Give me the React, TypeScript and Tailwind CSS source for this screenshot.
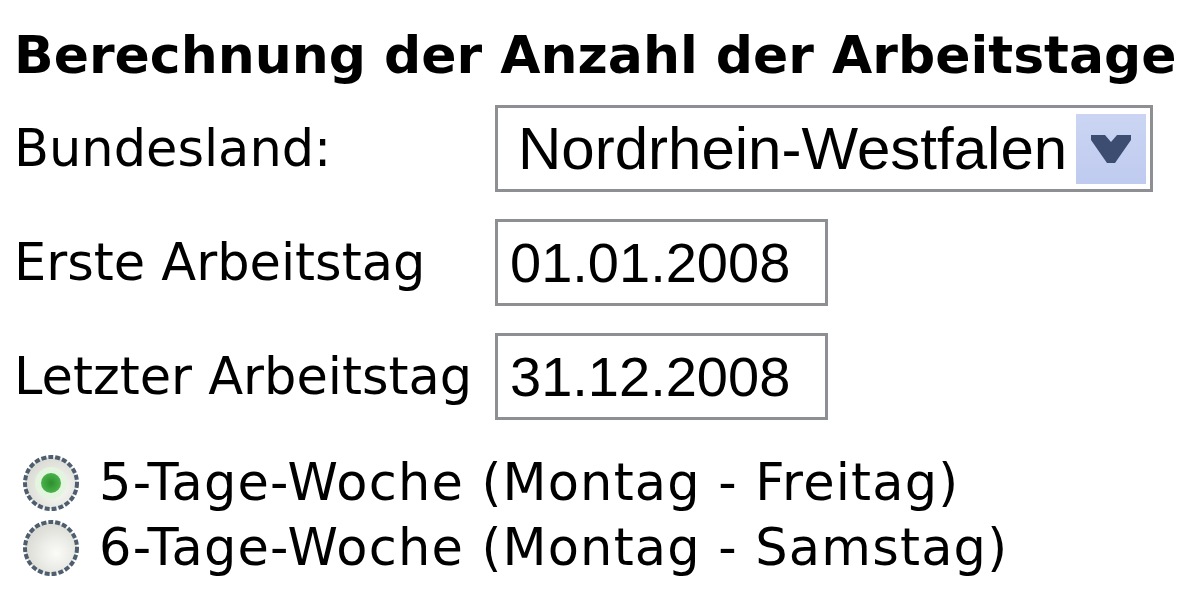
import React, { useState } from 'react';

const Radio: React.FC<{ checked: boolean }> = ({ checked }) => (
  <svg width="60" height="60" viewBox="0 0 60 60" className="shrink-0">
    <defs>
      <radialGradient id={checked ? 'rg1' : 'rg2'} cx="60%" cy="60%" r="70%">
        <stop offset="0%" stopColor="#fbfbf9" />
        <stop offset="100%" stopColor="#d6d6cf" />
      </radialGradient>
      <radialGradient id="dot" cx="50%" cy="50%" r="50%">
        <stop offset="0%" stopColor="#2b8f2b" />
        <stop offset="100%" stopColor="#4bb34b" />
      </radialGradient>
    </defs>
    <circle cx="30" cy="30" r="26" fill={`url(#${checked ? 'rg1' : 'rg2'})`} stroke="#4e5e6e" strokeWidth="4" strokeDasharray="5 2" />
    {checked && <circle cx="30" cy="30" r="16" fill="#e4f5df" />}
    {checked && <circle cx="30" cy="30" r="10" fill="url(#dot)" />}
  </svg>
);

const App: React.FC = () => {
  const [week, setWeek] = useState<5 | 6>(5);

  return (
    <div className="w-[1200px] h-[602px] overflow-hidden bg-white text-black pl-[14px] pt-[25px] font-['DejaVu_Sans',Verdana,sans-serif]">
      <h1 className="text-[52px] font-bold leading-[60px] whitespace-nowrap">
        Berechnung der Anzahl der Arbeitstage
      </h1>

      <div className="mt-[20px] flex flex-col gap-[27px]">
        <div className="flex items-center">
          <div className="w-[481px] text-[51px] leading-[60px]">Bundesland:</div>
          <div className="w-[658px] h-[87px] border-[3px] border-[#8d8f92] bg-white flex items-center pl-[20px] pr-[4px]">
            <span className="flex-1 text-[60px] leading-[70px] font-['Liberation_Sans',Arial,sans-serif] whitespace-nowrap">
              Nordrhein-Westfalen
            </span>
            <div className="w-[70px] h-[70px] bg-gradient-to-b from-[#cbd5f3] to-[#bfcbef] flex items-center justify-center">
              <svg width="40" height="28" viewBox="0 0 40 28">
                <polygon points="0,0 14,0 20,7 26,0 40,0 40,5 24,28 16,28 0,5" fill="#3d4d72" />
              </svg>
            </div>
          </div>
        </div>

        <div className="flex items-center">
          <div className="w-[481px] text-[51px] leading-[60px]">Erste Arbeitstag</div>
          <div className="w-[333px] h-[87px] border-[3px] border-[#8d8f92] bg-white flex items-center pl-[12px]">
            <span className="text-[56px] leading-[70px] font-['Liberation_Sans',Arial,sans-serif]">01.01.2008</span>
          </div>
        </div>

        <div className="flex items-center">
          <div className="w-[481px] text-[51px] leading-[60px] whitespace-nowrap">Letzter Arbeitstag</div>
          <div className="w-[333px] h-[87px] border-[3px] border-[#8d8f92] bg-white flex items-center pl-[12px]">
            <span className="text-[56px] leading-[70px] font-['Liberation_Sans',Arial,sans-serif]">31.12.2008</span>
          </div>
        </div>
      </div>

      <div className="mt-[31px] flex flex-col">
        <label className="flex items-center h-[64px] gap-[18px] pl-[7px] cursor-pointer" onClick={() => setWeek(5)}>
          <Radio checked={week === 5} />
          <span className="text-[51px] leading-[60px] tracking-[1.2px] whitespace-nowrap">5-Tage-Woche (Montag - Freitag)</span>
        </label>
        <label className="flex items-center h-[66px] gap-[18px] pl-[7px] cursor-pointer" onClick={() => setWeek(6)}>
          <Radio checked={week === 6} />
          <span className="text-[51px] leading-[60px] tracking-[1.2px] whitespace-nowrap">6-Tage-Woche (Montag - Samstag)</span>
        </label>
      </div>
    </div>
  );
};

export default App;
